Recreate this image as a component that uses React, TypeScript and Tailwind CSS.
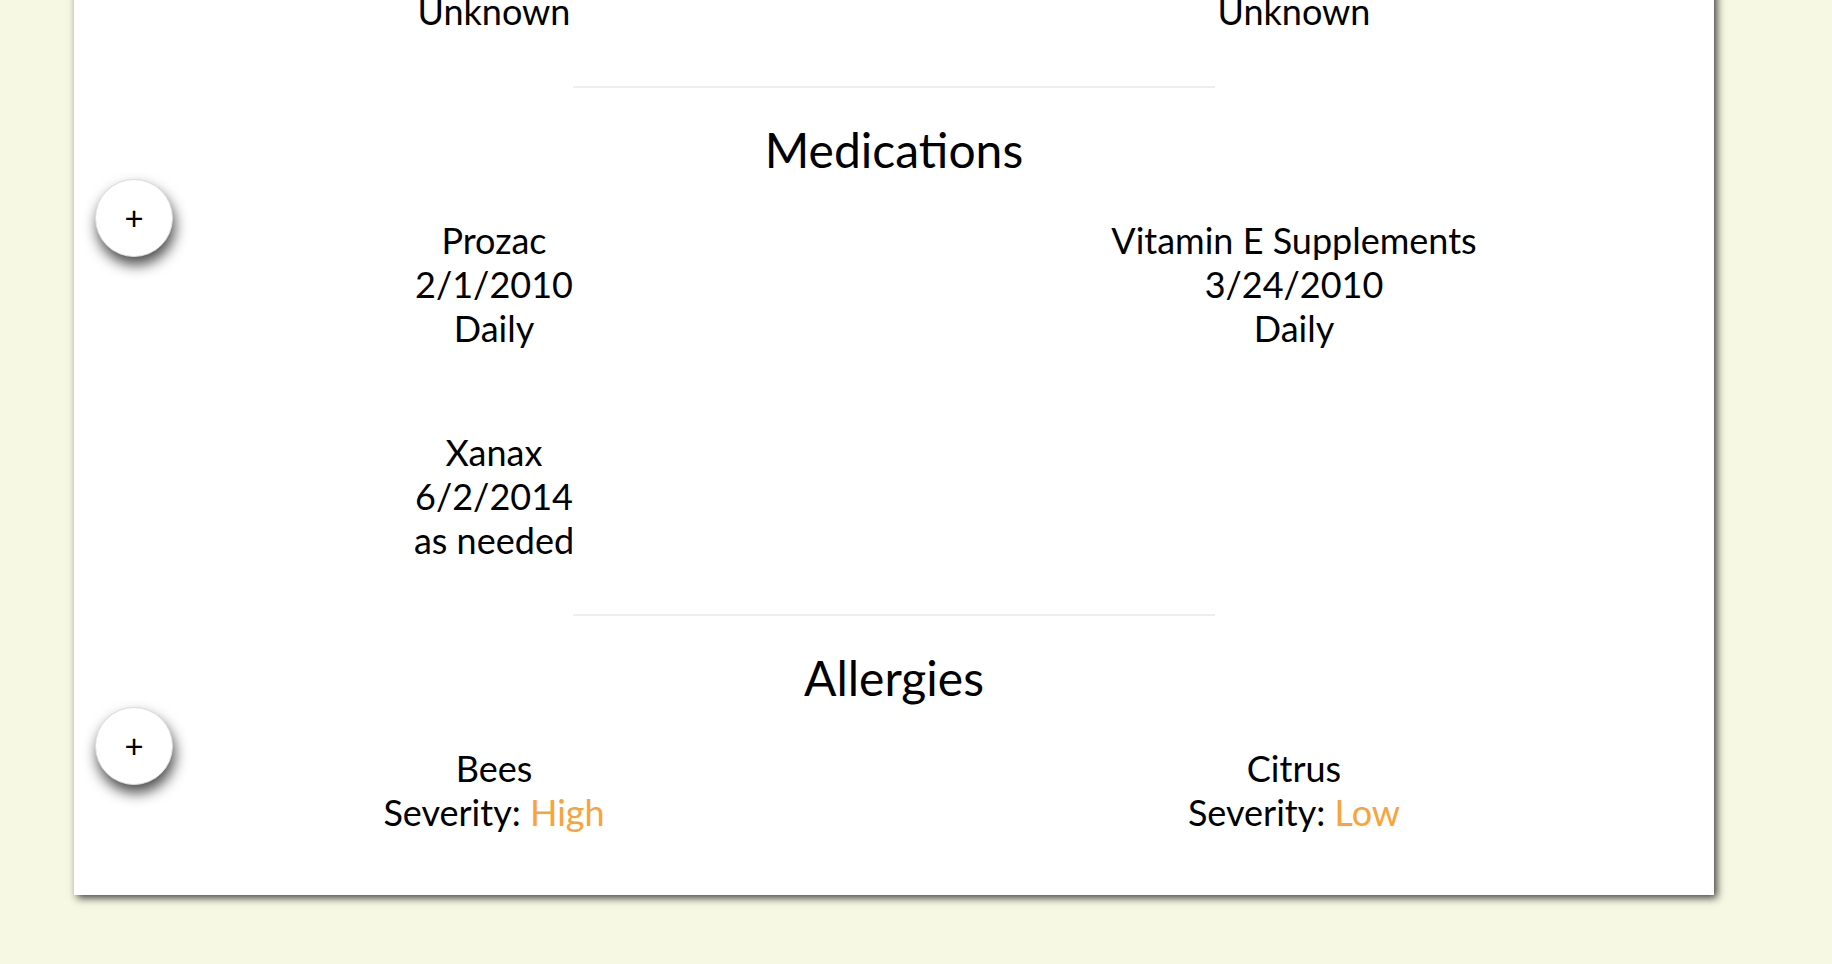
import React from "react";

type Item = { lines: React.ReactNode[] };

function AddButton() {
  return (
    <button className="absolute left-[21px] top-[-39px] flex h-[78px] w-[78px] items-center justify-center rounded-full border border-[#dcdcdc] bg-white text-[33px] leading-none text-black shadow-[2px_8px_14px_rgba(0,0,0,0.7)]">
      <span className="-mt-[2px]">+</span>
    </button>
  );
}

function Cell({ item }: { item: Item }) {
  return (
    <div className="text-center">
      {item.lines.map((l, i) => (
        <div key={i} className="whitespace-nowrap">
          {l}
        </div>
      ))}
    </div>
  );
}

function Divider({ className }: { className: string }) {
  return <div className={`mx-auto h-[2px] w-[642px] bg-[#eeeeee] ${className}`} />;
}

function Section({ title, items }: { title: string; items: Item[] }) {
  return (
    <div>
      <h2 className="mt-[32px] text-center text-[48px] leading-[60px] font-normal">{title}</h2>
      <div className="relative mt-[38px] px-[20px]">
        <AddButton />
        <div className="grid grid-cols-2 gap-y-[80px]">
          {items.map((it, i) => (
            <Cell key={i} item={it} />
          ))}
        </div>
      </div>
    </div>
  );
}

const sev = (s: string) => (
  <>
    Severity: <span className="text-[#f9a33a]">{s}</span>
  </>
);

export default function App() {
  return (
    <div
      className="h-[964px] w-full overflow-hidden bg-[#f7f8e3] text-black"
      style={{ fontFamily: "Lato, 'Noto Sans', sans-serif" }}
    >
      <div className="ml-[74px] -mt-[11px] w-[1640px] bg-white pb-[61px] text-[36px] leading-[44px] shadow-[3px_3px_8px_rgba(0,0,0,0.75)]">
        <div className="grid grid-cols-2 px-[20px]">
          <div className="text-center">Unknown</div>
          <div className="text-center">Unknown</div>
        </div>
        <Divider className="mt-[53px]" />
        <Section
          title="Medications"
          items={[
            { lines: ["Prozac", "2/1/2010", "Daily"] },
            { lines: ["Vitamin E Supplements", "3/24/2010", "Daily"] },
            { lines: ["Xanax", "6/2/2014", "as needed"] },
          ]}
        />
        <Divider className="mt-[52px]" />
        <Section
          title="Allergies"
          items={[
            { lines: ["Bees", sev("High")] },
            { lines: ["Citrus", sev("Low")] },
          ]}
        />
      </div>
    </div>
  );
}
